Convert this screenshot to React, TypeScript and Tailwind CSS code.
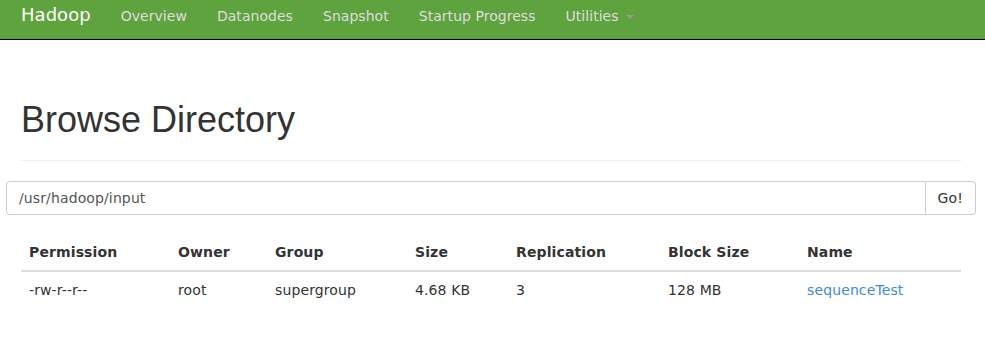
import React from "react"

const columns = [
  { label: "Permission", w: "w-[149px]" },
  { label: "Owner", w: "w-[97px]" },
  { label: "Group", w: "w-[140px]" },
  { label: "Size", w: "w-[101px]" },
  { label: "Replication", w: "w-[152px]" },
  { label: "Block Size", w: "w-[139px]" },
  { label: "Name", w: "w-[162px]" },
]

const rows = [
  { permission: "-rw-r--r--", owner: "root", group: "supergroup", size: "4.68 KB", replication: "3", blockSize: "128 MB", name: "sequenceTest" },
]

export default function App() {
  return (
    <main className="min-h-screen bg-white text-[#333] text-[14px] tracking-[0.12px] font-['DejaVu_Sans',sans-serif]">
      {/* Navbar */}
      <nav className="h-[40px] bg-[#5fa33e] border-b border-black tracking-[0.04px]">
        <div className="flex items-baseline pt-[5px] pl-[21px] leading-[20px]">
          <span className="text-[18px] text-white pr-[15px]">Hadoop</span>
          <a className="px-[15px] text-[#dddddd]">Overview</a>
          <a className="px-[15px] text-[#dddddd]">Datanodes</a>
          <a className="px-[15px] text-[#dddddd]">Snapshot</a>
          <a className="px-[15px] text-[#dddddd]">Startup Progress</a>
          <a className="px-[15px] text-[#dddddd] flex items-center">
            Utilities
            <span className="ml-[7px] mt-[1px] w-0 h-0 border-x-[4px] border-x-transparent border-t-[4px] border-t-[#999]" />
          </a>
        </div>
      </nav>

      {/* Page header */}
      <div className="mx-[21px] w-[940px] mt-[60px] pb-[20px] border-b border-[#eeeeee]">
        <h1 className="text-[36px] leading-[40px] tracking-normal font-['Liberation_Sans',Arial,sans-serif] text-[#333]">
          Browse Directory
        </h1>
      </div>

      {/* Path input */}
      <div className="flex mt-[20px] ml-[6px] w-[970px] h-[34px]">
        <input
          type="text"
          defaultValue="/usr/hadoop/input"
          className="flex-1 h-full px-[12px] border border-[#cccccc] rounded-l-[4px] text-[14px] tracking-[0.12px] text-[#555] outline-none"
        />
        <button className="h-full px-[12px] border border-l-0 border-[#cccccc] rounded-r-[4px] bg-white text-[#333]">
          Go!
        </button>
      </div>

      {/* Listing */}
      <table className="mt-[19px] ml-[21px] w-[940px] border-collapse text-left">
        <thead>
          <tr>
            {columns.map((c) => (
              <th key={c.label} className={`${c.w} px-[8px] py-[8px] leading-[20px] font-bold border-b-2 border-[#dddddd]`}>
                {c.label}
              </th>
            ))}
          </tr>
        </thead>
        <tbody>
          {rows.map((r) => (
            <tr key={r.name}>
              <td className="px-[8px] py-[8px] leading-[20px]">{r.permission}</td>
              <td className="px-[8px] py-[8px] leading-[20px]">{r.owner}</td>
              <td className="px-[8px] py-[8px] leading-[20px]">{r.group}</td>
              <td className="px-[8px] py-[8px] leading-[20px]">{r.size}</td>
              <td className="px-[8px] py-[8px] leading-[20px]">{r.replication}</td>
              <td className="px-[8px] py-[8px] leading-[20px]">{r.blockSize}</td>
              <td className="px-[8px] py-[8px] leading-[20px]">
                <a className="text-[#428bca]">{r.name}</a>
              </td>
            </tr>
          ))}
        </tbody>
      </table>
    </main>
  )
}
